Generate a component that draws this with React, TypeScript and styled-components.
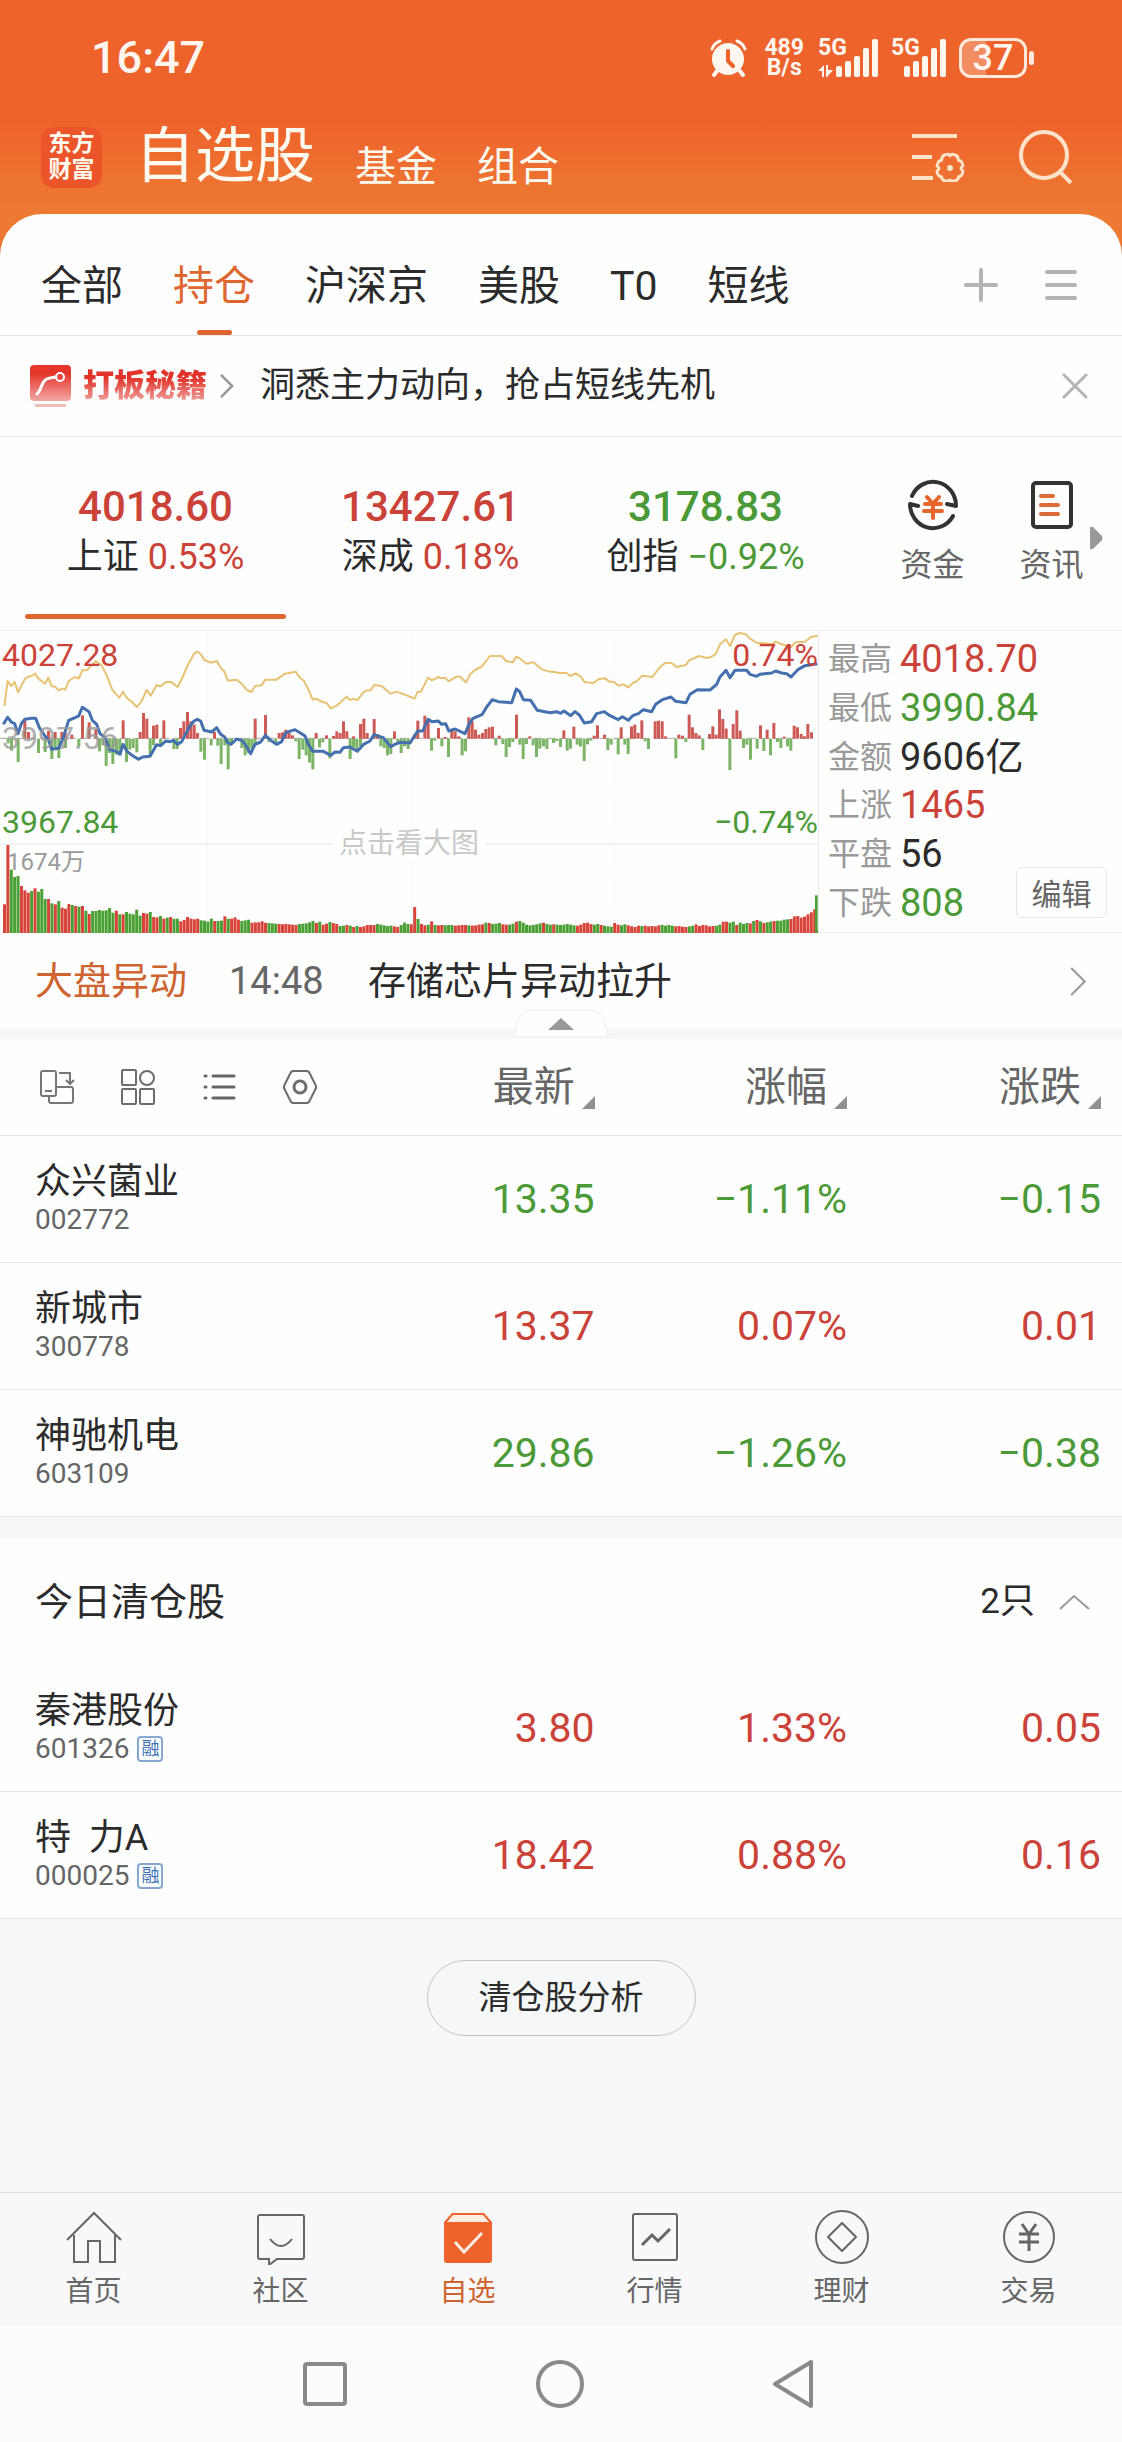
import React from "react";
import styled, { createGlobalStyle } from "styled-components";

const color = {
  up: "#cb4239",
  down: "#4c9a37",
  accent: "#e0662f",
  ink: "#2b2b2b",
  mid: "#666666",
  soft: "#9a9a9a",
  line: "#e6e6e6",
  band: "#f6f7f9",
};

type Tone = "up" | "down" | "ink";

const GlobalStyle = createGlobalStyle`
  *, *::before, *::after { box-sizing: border-box; }
  body {
    margin: 0;
    background: ${color.band};
    color: ${color.ink};
    font-family: Roboto, "Noto Sans CJK SC", sans-serif;
  }
  button {
    margin: 0;
    padding: 0;
    border: 0;
    background: none;
    font: inherit;
    color: inherit;
    cursor: pointer;
  }
  a { color: inherit; text-decoration: none; }
  h1, h2, p, dl, dd { margin: 0; font-size: inherit; font-weight: inherit; }
  svg { display: block; }
`;

const Page = styled.div`
  display: flex;
  flex-direction: column;
  min-height: 100vh;
  background: linear-gradient(#ee622b 0, #ee622b 118px, #ed7933 206px, #ed7933 300px, ${color.band} 300px);
`;

/* ---------- status bar ---------- */

const StatusBar = styled.div`
  display: flex;
  align-items: center;
  justify-content: space-between;
  height: 116px;
  padding: 0 88px 0 91px;
  color: #fff6ef;
`;

const Clock = styled.time`
  font-size: 45px;
  font-weight: 500;
  line-height: 48px;
`;

const StatusIcons = styled.div`
  display: flex;
  align-items: center;
`;

const NetSpeed = styled.div`
  display: flex;
  flex-direction: column;
  margin: 0 14px 0 17px;
  font-size: 23px;
  font-weight: 700;
  line-height: 20px;
  text-align: center;
`;

const Signal = styled.div`
  display: grid;
  margin-right: 12px;

  > * { grid-area: 1 / 1; }
`;

const SignalLabel = styled.span`
  font-size: 23px;
  font-weight: 700;
  line-height: 18px;
`;

const Battery = styled.div`
  display: flex;
  align-items: center;
  gap: 2px;
`;

const BatteryBody = styled.div`
  width: 68px;
  height: 40px;
  border: 3px solid #ffe9dc;
  border-radius: 12px;
  background: linear-gradient(90deg, #f28d61 38%, transparent 38%);
  font-size: 36px;
  font-weight: 500;
  line-height: 35px;
  text-align: center;
`;

const BatteryTip = styled.span`
  width: 5px;
  height: 14px;
  border-radius: 3px;
  background: #ffe9dc;
`;

/* ---------- header ---------- */

const Header = styled.header`
  display: flex;
  align-items: center;
  height: 98px;
  padding: 0 49px 16px 41px;
  color: #fffaf0;
`;

const Logo = styled.div`
  width: 61px;
  height: 61px;
  padding: 4px 0;
  border-radius: 13px;
  background: #ec5529;
  font-size: 23px;
  font-weight: 700;
  line-height: 26px;
  text-align: center;
`;

const Sections = styled.nav`
  display: flex;
  flex: 1;
  align-items: flex-end;
  gap: 40px;
  margin-left: 33px;
`;

const Section = styled.a<{ $current?: boolean }>`
  font-size: ${(p) => (p.$current ? 60 : 41)}px;
  line-height: ${(p) => (p.$current ? 70 : 50)}px;
`;

const HeaderActions = styled.div`
  display: flex;
  align-items: center;
  gap: 54px;
`;

/* ---------- sheet and tabs ---------- */

const Sheet = styled.main`
  display: flex;
  flex: 1;
  flex-direction: column;
  overflow: hidden;
  border-radius: 42px 42px 0 0;
  background: #fefefe;
`;

const TabRow = styled.div`
  display: flex;
  align-items: stretch;
  justify-content: space-between;
  height: 122px;
  padding: 0 44px 0 41px;
  border-bottom: 1px solid ${color.line};
`;

const Tabs = styled.div`
  display: flex;
  gap: 50px;
`;

const Tab = styled.button<{ $active?: boolean }>`
  display: flex;
  flex-direction: column;
  align-items: center;
  padding-top: 46px;
  font-size: 41px;
  line-height: 52px;
  color: ${(p) => (p.$active ? color.accent : color.ink)};

  &::after {
    content: "";
    width: 35px;
    height: 5px;
    margin-top: auto;
    border-radius: 3px;
    background: ${(p) => (p.$active ? color.accent : "transparent")};
  }
`;

const TabTools = styled.div`
  display: flex;
  align-items: center;
  gap: 46px;
  padding-top: 20px;
`;

/* ---------- banner ---------- */

const Banner = styled.div`
  display: flex;
  align-items: center;
  height: 101px;
  padding: 0 34px 0 30px;
  border-bottom: 1px solid ${color.line};
`;

const BannerLink = styled.a`
  display: flex;
  flex: 1;
  align-items: center;
`;

const BannerTag = styled.strong`
  margin: 0 13px 0 12px;
  background: linear-gradient(#e2332a 30%, #f0a49f 90%);
  background-clip: text;
  -webkit-background-clip: text;
  color: transparent;
  font-size: 31px;
  font-weight: 900;
  line-height: 40px;
`;

const BannerText = styled.span`
  margin-left: 26px;
  font-size: 35px;
  line-height: 44px;
`;

/* ---------- index strip ---------- */

const IndexStrip = styled.section`
  position: relative;
  display: grid;
  grid-template-columns: 275fr 275fr 275fr 30fr 119fr 119fr;
  height: 193px;
  padding: 0 11px 0 18px;
`;

const IndexCard = styled.button<{ $active?: boolean }>`
  display: flex;
  flex-direction: column;
  align-items: center;
  padding: 45px 7px 11px;

  &::after {
    content: "";
    width: 100%;
    height: 5px;
    margin-top: auto;
    border-radius: 3px;
    background: ${(p) => (p.$active ? color.accent : "transparent")};
  }
`;

const IndexValue = styled.strong<{ $tone: Tone }>`
  font-size: 42px;
  font-weight: 500;
  line-height: 50px;
  color: ${(p) => color[p.$tone]};
`;

const IndexLabel = styled.span`
  font-size: 36px;
  line-height: 50px;
  white-space: nowrap;
`;

const Toned = styled.span<{ $tone: Tone }>`
  color: ${(p) => color[p.$tone]};
`;

const Shortcut = styled.a`
  display: flex;
  flex-direction: column;
  align-items: center;
  gap: 13px;
  padding-top: 42px;
  font-size: 32px;
  line-height: 42px;
  color: ${color.mid};
`;

const MoreShortcuts = styled.button`
  position: absolute;
  top: 89px;
  right: 19px;
`;

const ShortcutGap = styled.span``;

/* ---------- chart and statistics ---------- */

const Market = styled.section`
  display: grid;
  grid-template-columns: 819fr 303fr;
  height: 303px;
  border-top: 1px solid #f0f0f0;
  border-bottom: 1px solid #f0f0f0;
`;

const ChartBox = styled.button`
  position: relative;
  border-right: 1px solid #ececec;
  font-size: 32px;
  line-height: 36px;

  > svg { width: 100%; height: 100%; }
`;

const ChartLabel = styled.span<{ $top: number; $right?: boolean; $ink: string }>`
  position: absolute;
  top: ${(p) => p.$top}px;
  ${(p) => (p.$right ? "right: 0" : "left: 2px")};
  color: ${(p) => p.$ink};
`;

const VolumeLabel = styled.span`
  position: absolute;
  top: 213px;
  left: 7px;
  font-size: 24px;
  color: ${color.soft};
`;

const ChartHint = styled.span`
  position: absolute;
  top: 195px;
  left: 50%;
  padding: 0 6px;
  transform: translateX(-50%);
  background: #fefefe;
  font-size: 28px;
  white-space: nowrap;
  color: #c9c9c9;
`;

const Stats = styled.dl`
  position: relative;
  display: grid;
  grid-auto-rows: 1fr;
  padding: 4px 0 6px 9px;
`;

const Stat = styled.div`
  display: flex;
  align-items: center;
  gap: 8px;
`;

const StatName = styled.dt`
  font-size: 32px;
  line-height: 48px;
  color: ${color.soft};
`;

const StatValue = styled.dd<{ $tone: Tone }>`
  font-size: 38px;
  line-height: 48px;
  color: ${(p) => color[p.$tone]};
`;

const EditButton = styled.button`
  position: absolute;
  right: 15px;
  bottom: 15px;
  width: 91px;
  height: 51px;
  padding-bottom: 2px;
  border: 1px solid #e6e6e6;
  border-radius: 6px;
  background: #fefefe;
  font-size: 30px;
  color: ${color.mid};
`;

/* ---------- event row ---------- */

const EventRow = styled.section`
  position: relative;
  display: flex;
  align-items: center;
  height: 106px;
  padding: 0 35px;
  border-bottom: 10px solid ${color.band};
  font-size: 38px;
  line-height: 48px;
`;

const EventTag = styled.strong`
  width: 194px;
  font-weight: 400;
  color: #cf6430;
`;

const EventTime = styled.time`
  width: 139px;
  color: ${color.mid};
`;

const EventTitle = styled.a`
  flex: 1;
`;

const Collapse = styled.button`
  position: absolute;
  bottom: -9px;
  left: 50%;
  transform: translateX(-50%);
`;

/* ---------- watch list ---------- */

const Table = styled.table`
  width: 100%;
  border-spacing: 0;
  table-layout: fixed;

  th, td { border-bottom: 1px solid ${color.line}; }
`;

const NameCol = styled.col`
  width: 30.5%;
`;

const ValueCol = styled.col`
  width: 22.5%;
`;

const HeadRow = styled.tr`
  height: 97px;
`;

const ToolHead = styled.th`
  padding: 0 0 0 39px;
`;

const ViewTools = styled.div`
  display: flex;
  gap: 45px;
`;

const Head = styled.th`
  padding: 0;
  font-weight: 400;
  text-align: right;

  &:last-child { padding-right: 21px; }
`;

const SortButton = styled.button`
  display: inline-flex;
  align-items: flex-end;
  gap: 7px;
  font-size: 41px;
  line-height: 50px;
  color: ${color.mid};

  > svg { margin-bottom: 3px; }
`;

const StockRow = styled.tr`
  height: 127px;
`;

const NameCell = styled.th`
  padding: 0 0 0 35px;
  font-weight: 400;
  text-align: left;
  white-space: nowrap;
`;

const StockName = styled.div`
  font-size: 36px;
  line-height: 42px;
  white-space: pre;
`;

const StockCode = styled.div`
  display: flex;
  align-items: center;
  gap: 8px;
  font-size: 28px;
  line-height: 34px;
  color: ${color.mid};
`;

const MarginBadge = styled.span`
  width: 26px;
  height: 26px;
  border: 2px solid #86a8d0;
  border-radius: 4px;
  font-size: 18px;
  line-height: 21px;
  text-align: center;
  color: #3f74b5;
`;

const Value = styled.td<{ $tone: Tone }>`
  padding: 0;
  font-size: 41px;
  line-height: 50px;
  text-align: right;
  color: ${(p) => color[p.$tone]};

  &:last-child { padding-right: 21px; }
`;

const ClearedHeader = styled.div`
  display: flex;
  align-items: center;
  justify-content: space-between;
  height: 148px;
  padding: 0 32px 0 35px;
  border-top: 21px solid ${color.band};
  font-size: 38px;
  line-height: 48px;
`;

const ClearedCount = styled.button`
  display: flex;
  align-items: center;
  gap: 24px;
  font-size: 35px;
`;

const Footer = styled.div`
  flex: 1;
  padding: 41px 0;
  background: ${color.band};
  text-align: center;
`;

const AnalyseButton = styled.button`
  height: 76px;
  padding: 0 51px;
  border: 1px solid #c4c4c4;
  border-radius: 38px;
  font-size: 33px;
  line-height: 72px;
`;

/* ---------- bottom bars ---------- */

const BottomNav = styled.nav`
  display: grid;
  grid-template-columns: repeat(6, 1fr);
  height: 133px;
  border-top: 1px solid #dedede;
  background: #f8f8fa;
`;

const NavItem = styled.a<{ $active?: boolean }>`
  display: flex;
  flex-direction: column;
  align-items: center;
  padding-top: 16px;
  gap: 8px;
  font-size: 28px;
  line-height: 38px;
  color: ${(p) => (p.$active ? "#cf6430" : color.mid)};
`;

const SystemBar = styled.div`
  display: grid;
  grid-template-columns: repeat(3, 1fr);
  align-items: center;
  justify-items: center;
  height: 117px;
  padding: 0 210px 0 208px;
  background: #fcfcfc;
`;

/* ---------- data ---------- */

const tabs = ["全部", "持仓", "沪深京", "美股", "T0", "短线"];

const indices: { value: string; name: string; change: string; tone: Tone }[] = [
  { value: "4018.60", name: "上证", change: "0.53%", tone: "up" },
  { value: "13427.61", name: "深成", change: "0.18%", tone: "up" },
  { value: "3178.83", name: "创指", change: "−0.92%", tone: "down" },
];

const stats: { name: string; value: string; tone: Tone }[] = [
  { name: "最高", value: "4018.70", tone: "up" },
  { name: "最低", value: "3990.84", tone: "down" },
  { name: "金额", value: "9606亿", tone: "ink" },
  { name: "上涨", value: "1465", tone: "up" },
  { name: "平盘", value: "56", tone: "ink" },
  { name: "下跌", value: "808", tone: "down" },
];

type Stock = { name: string; code: string; margin?: boolean; last: string; pct: string; diff: string; tone: Tone };

const holdings: Stock[] = [
  { name: "众兴菌业", code: "002772", last: "13.35", pct: "−1.11%", diff: "−0.15", tone: "down" },
  { name: "新城市", code: "300778", last: "13.37", pct: "0.07%", diff: "0.01", tone: "up" },
  { name: "神驰机电", code: "603109", last: "29.86", pct: "−1.26%", diff: "−0.38", tone: "down" },
];

const cleared: Stock[] = [
  { name: "秦港股份", code: "601326", margin: true, last: "3.80", pct: "1.33%", diff: "0.05", tone: "up" },
  { name: "特  力A", code: "000025", margin: true, last: "18.42", pct: "0.88%", diff: "0.16", tone: "up" },
];

/* Chart units: three per pixel; one minute bar every 10.17 units. */
const averageLine =
  "13,255 23,180 34,195 44,183 54,214 74,175 85,167 95,165 105,158 115,173 135,188 145,170 155,195 165,197 176,208 186,203 196,206 206,180 225,168 236,173 247,148 260,148 275,133 287,120 305,133 320,163 338,208 358,230 369,212 380,230 395,242 411,258 425,240 440,207 452,224 470,192 481,196 500,182 515,184 533,198 545,175 562,135 582,98 592,92 602,99 613,117 633,125 650,120 663,142 672,150 684,179 710,176 725,188 740,207 755,213 765,195 785,193 796,176 830,176 855,158 887,152 897,167 912,180 928,212 938,236 948,233 970,244 980,246 992,262 1010,254 1040,227 1050,237 1062,233 1072,238 1091,213 1101,208 1112,208 1122,192 1145,195 1172,218 1190,212 1222,224 1232,228 1244,233 1253,212 1263,212 1284,170 1296,178 1315,168 1325,172 1335,170 1346,181 1365,169 1378,166 1398,184 1410,160 1425,147 1445,137 1470,105 1505,105 1518,120 1538,124 1549,107 1559,112 1579,128 1600,124 1625,145 1645,151 1680,156 1700,156 1711,165 1727,157 1741,166 1755,184 1780,186 1797,174 1815,172 1827,181 1843,184 1855,194 1870,190 1885,199 1898,186 1910,181 1927,164 1957,168 1980,138 1995,126 2015,126 2030,138 2058,132 2067,118 2097,105 2120,111 2135,107 2148,98 2160,70 2178,55 2190,75 2205,42 2220,36 2238,40 2250,53 2272,66 2290,66 2315,70 2327,62 2345,70 2373,78 2387,64 2415,62 2433,48 2452,44";

const priceLine =
  "10,310 23,289 34,303 44,308 54,338 64,308 74,295 95,292 107,292 118,320 135,345 145,355 155,385 176,382 190,350 206,298 225,290 236,285 247,259 267,272 277,298 290,310 300,338 315,350 328,385 350,392 360,400 369,370 382,392 395,402 415,415 428,408 450,406 462,385 470,371 482,374 497,360 510,362 520,358 533,370 545,362 555,343 570,315 582,300 592,295 602,300 612,328 635,333 650,320 662,340 674,348 684,366 693,370 710,354 725,358 735,370 752,398 765,370 782,363 796,343 815,360 830,370 845,362 857,335 885,326 900,335 915,345 925,370 938,391 970,391 992,403 1005,393 1020,394 1030,380 1050,378 1072,391 1091,370 1110,360 1122,341 1150,350 1172,377 1185,370 1200,364 1230,366 1253,330 1268,330 1284,295 1296,302 1315,300 1325,310 1337,308 1346,330 1365,324 1395,338 1408,308 1418,293 1447,280 1460,258 1477,236 1495,242 1535,245 1549,204 1559,212 1570,236 1592,238 1612,268 1650,275 1670,272 1682,277 1692,270 1712,284 1725,272 1738,282 1753,306 1775,302 1790,278 1813,272 1830,284 1855,296 1867,287 1885,298 1898,284 1915,278 1930,266 1955,272 1967,250 1987,236 2013,228 2027,241 2058,245 2070,220 2092,206 2130,207 2150,190 2160,168 2178,148 2190,170 2205,148 2240,148 2250,160 2270,166 2280,160 2315,156 2327,150 2345,156 2360,158 2373,168 2395,145 2415,134 2452,128";

/* [x, height]: above zero is buying strength, below is selling. */
const momentum: [number, number][] = [
  [74, 54], [85, 20], [145, 24], [165, 20], [185, 20], [195, 17], [215, 12], [247, 70], [267, 49], [287, 27], [369, 55],
  [420, 20], [430, 77], [440, 60], [460, 39], [470, 42], [491, 55], [541, 32], [551, 52], [562, 80], [572, 52], [582, 42],
  [592, 17], [643, 20], [765, 60], [796, 71], [837, 17], [847, 19], [857, 27], [867, 17], [877, 10], [948, 17], [979, 10],
  [1000, 8], [1010, 22], [1020, 17], [1030, 52], [1040, 22], [1060, 7], [1081, 44], [1091, 60], [1101, 17], [1122, 59],
  [1132, 14], [1183, 22], [1244, 14], [1253, 54], [1274, 69], [1284, 52], [1315, 32], [1335, 5], [1355, 27], [1365, 22], [1376, 7],
  [1406, 64], [1416, 52], [1426, 27], [1436, 12], [1447, 17], [1457, 29], [1467, 34], [1477, 36], [1497, 9], [1549, 72],
  [1589, 7], [1691, 25], [1721, 36], [1782, 9], [1792, 40], [1813, 12], [1863, 34], [1894, 37], [1904, 42], [1914, 17],
  [1925, 55], [1965, 52], [1975, 54], [1986, 52], [1996, 7], [2036, 12], [2047, 9], [2067, 72], [2077, 34], [2087, 17],
  [2097, 10], [2128, 14], [2138, 37], [2148, 12], [2158, 88], [2168, 59], [2178, 30], [2199, 44], [2210, 85], [2220, 24],
  [2281, 40], [2301, 27], [2321, 47], [2352, 6], [2382, 39], [2392, 34], [2403, 14], [2413, 7], [2423, 44], [2434, 19],
  [24, -14], [34, -36], [54, -70], [115, -43], [135, -40], [155, -61], [165, -28], [176, -58], [196, -28], [236, -23], [298, -38],
  [308, -20], [318, -82], [328, -43], [338, -76], [349, -48], [359, -43], [379, -70], [389, -33], [399, -28], [410, -41],
  [450, -53], [460, -20], [481, -23], [521, -31], [531, -31], [602, -39], [613, -63], [633, -20], [653, -21], [663, -76],
  [674, -20], [684, -92], [694, -14], [725, -28], [735, -50], [745, -43], [755, -31], [765, -21], [806, -10], [827, -18],
  [887, -8], [897, -61], [908, -33], [918, -50], [928, -72], [938, -92], [958, -26], [968, -11], [989, -59], [1050, -61],
  [1060, -26], [1070, -36], [1081, -23], [1142, -23], [1152, -28], [1162, -50], [1172, -46], [1193, -12], [1203, -43],
  [1213, -23], [1224, -31], [1294, -36], [1304, -6], [1325, -23], [1345, -55], [1386, -50], [1396, -38], [1487, -20],
  [1508, -16], [1518, -55], [1528, -25], [1538, -10], [1559, -18], [1569, -61], [1579, -16], [1599, -20], [1609, -55],
  [1619, -30], [1630, -23], [1640, -31], [1660, -13], [1670, -7], [1681, -25], [1701, -36], [1711, -30], [1731, -18],
  [1741, -24], [1752, -67], [1762, -17], [1772, -6], [1823, -34], [1833, -18], [1854, -47], [1874, -18], [1884, -46],
  [1935, -8], [1945, -31], [2027, -59], [2057, -10], [2108, -34], [2189, -94], [2230, -28], [2240, -18], [2251, -63],
  [2271, -30], [2291, -37], [2311, -50], [2332, -10], [2342, -28], [2362, -23], [2372, -36],
];

const volumes = [
  86, 264, 190, 168, 171, 141, 128, 121, 126, 134, 124, 132, 102, 102, 89, 86, 96, 76, 73, 87, 84, 81, 79, 81, 67, 57,
  66, 66, 69, 67, 68, 75, 61, 67, 56, 56, 63, 58, 56, 70, 52, 60, 58, 63, 48, 47, 51, 43, 46, 48, 43, 43, 35, 39, 48, 43,
  41, 43, 38, 37, 34, 43, 36, 36, 37, 50, 43, 43, 47, 40, 36, 38, 40, 31, 32, 32, 35, 31, 30, 29, 28, 27, 26, 27, 26, 25,
  24, 27, 28, 29, 32, 36, 30, 34, 25, 28, 33, 30, 27, 21, 22, 24, 22, 18, 21, 18, 20, 24, 24, 24, 27, 25, 23, 21, 22, 20, 18,
  24, 31, 27, 26, 78, 42, 27, 23, 25, 35, 24, 23, 24, 23, 24, 24, 22, 23, 24, 24, 23, 22, 23, 25, 26, 31, 30, 27, 28, 30,
  26, 25, 25, 28, 34, 36, 31, 25, 23, 24, 26, 29, 31, 27, 25, 26, 25, 24, 25, 27, 25, 23, 22, 25, 30, 31, 27, 25, 27, 24,
  22, 20, 19, 30, 25, 23, 26, 23, 20, 18, 22, 21, 22, 20, 21, 20, 23, 24, 22, 24, 22, 20, 21, 19, 18, 20, 22, 26, 21, 24,
  23, 20, 21, 22, 25, 34, 34, 31, 34, 24, 31, 27, 30, 29, 36, 39, 35, 30, 32, 34, 36, 37, 37, 40, 41, 42, 50, 51, 46, 49, 56, 62,
  71, 9,
];

const volumeTones =
  "RRGGGRRRGRGGGRGRGRRRGRGRGRGGGGGGGRGRGGGGGRRGRRGRGRGGRRRRRRGGGGRGGRGRRRGGGRRRRRGGGRRRRRRGGGGGRGRRGRRGGRGRGRRRRRGGGGGRRGGGRRGRRGRGRRGGGRRRRGRRRRGRGGGRRGGRGGGGGGGRGGRGGGGGGRRRRRGGRGGGRRGGRRRRGRRRRRGGGGRRRRGGRRRRRRGGRRGGRGGGRGRGRGGRGGGGRRRRRR";

/* ---------- drawings ---------- */

const AlarmIcon = () => (
  <svg width="37" height="38" viewBox="0 0 37 38" fill="none" stroke="currentColor" strokeLinecap="round">
    <circle cx="18" cy="20" r="16" fill="currentColor" stroke="none" />
    <path d="M2 10a13 13 0 0 1 8-8M35 10a13 13 0 0 0-8-8" strokeWidth="3" />
    <path d="M7 32l-3 4M30 32l3 4" strokeWidth="4" />
    <path d="M18 12v10l5 5" stroke="#ee622b" strokeWidth="4" strokeLinejoin="round" />
  </svg>
);

const SignalBars = ({ traffic }: { traffic?: boolean }) => {
  const width = traffic ? 61 : 56;
  return (
    <svg width={width} height="38" viewBox={`0 0 ${width} 38`} fill="currentColor">
      {traffic && <path d="M0 32l6-6v12H4v-6zM8 26h2v5h5l-6 7H8z" />}
      {[11, 16, 21, 29, 38].map((h, i) => (
        <rect key={h} x={(traffic ? 18 : 13) + i * 9} y={38 - h} width="6" height={h} rx="2" />
      ))}
    </svg>
  );
};

const ListSettingsIcon = () => (
  <svg width="53" height="50" viewBox="0 0 53 50" fill="none" stroke="#ffe3c8" strokeWidth="4">
    <path d="M0 4h45M0 25h20M0 46h21" />
    <path
      d="M33 23q4-2 5 1 1-3 5-1 3 1 3 3 0 3 3 3 2 3 2 5-4 2 0 5 0 3-2 5-3 0-3 3-4 4-8 1-4 3-8-1 0-3-3-3-2-2-2-5 4-3 0-5 0-2 2-5 3 0 3-3 0-2 3-3z"
      strokeWidth="3"
      strokeLinejoin="round"
    />
    <circle cx="38" cy="36" r="3" fill="#ffe3c8" stroke="none" />
  </svg>
);

const SearchIcon = () => (
  <svg width="54" height="54" viewBox="0 0 54 54" fill="none" stroke="#ffe3c8" strokeWidth="4">
    <circle cx="25" cy="25" r="23" />
    <path d="M40 41l12 12" />
  </svg>
);

const PlusIcon = () => (
  <svg width="34" height="34" viewBox="0 0 34 34" stroke="#b3b3b3" strokeWidth="4" strokeLinecap="round">
    <path d="M17 2v30M2 17h30" />
  </svg>
);

const MenuIcon = () => (
  <svg width="34" height="34" viewBox="0 0 34 34" stroke="#b3b3b3" strokeWidth="4" strokeLinecap="round">
    <path d="M3 4h28M3 17h28M3 30h28" />
  </svg>
);

const BannerIcon = () => (
  <svg width="41" height="43" viewBox="0 0 41 43" fill="none">
    <defs>
      <linearGradient id="bannerFill" x1="0" y1="0" x2="0" y2="1">
        <stop offset="25%" stopColor="#e6372c" />
        <stop offset="100%" stopColor="#f0a8a4" />
      </linearGradient>
    </defs>
    <rect width="41" height="36" rx="4" fill="url(#bannerFill)" />
    <rect x="5" y="39" width="31" height="3" rx="1" fill="#f0bcb9" />
    <path d="M7 29c5-4 4-15 13-16l6-1" stroke="#fff" strokeWidth="3" strokeLinecap="round" />
    <circle cx="30" cy="12" r="4" stroke="#fff" strokeWidth="2" />
  </svg>
);

const Chevron = ({ width, height, weight }: { width: number; height: number; weight: number }) => (
  <svg width={width} height={height} viewBox="0 0 16 28" fill="none" stroke="#999" strokeWidth={weight}>
    <path d="M1 1l13 13L1 27" />
  </svg>
);

const ChevronUp = () => (
  <svg width="31" height="16" viewBox="0 0 31 16" fill="none" stroke="#999" strokeWidth="2">
    <path d="M1 15L15 2l15 13" />
  </svg>
);

const CloseIcon = () => (
  <svg width="26" height="26" viewBox="0 0 26 26" stroke="#b3b3b3" strokeWidth="3" strokeLinecap="round">
    <path d="M2 2l22 22M24 2L2 24" />
  </svg>
);

const FundIcon = () => (
  <svg width="52" height="52" viewBox="0 0 52 52" fill="none" stroke="#333" strokeWidth="4" strokeLinecap="round" strokeLinejoin="round">
    <path d="M5 17A23 24 0 0 1 49 27l-9-2" />
    <path d="M46 37A23 24 0 0 1 3 25l8 2" />
    <path d="M20 18l6 7 6-7M18 25h16M17 32h18M26 25v14" stroke="#e8652c" />
  </svg>
);

const NewsIcon = () => (
  <svg width="52" height="52" viewBox="0 0 52 52" fill="none" stroke="#333" strokeWidth="4" strokeLinecap="round">
    <rect x="7" y="4" width="38" height="44" rx="3" />
    <path d="M15 17h12M15 26h17M15 35h17" stroke="#dc6b38" />
  </svg>
);

const Chart = () => (
  <svg viewBox="0 30 2454 906" preserveAspectRatio="none" fill="none">
    {[623, 1234, 1843].map((x) => (
      <path key={x} d={`M${x} 36V936`} stroke="#e9e9e9" strokeWidth="3" strokeDasharray="4 6" />
    ))}
    <path d="M0 669H2454" stroke="#ececec" strokeWidth="4" />
    <path d="M0 352H2440" stroke="#a9a9a9" strokeWidth="3" strokeDasharray="28 12" />
    {momentum.map(([x, h]) => (
      <rect key={`${x}/${h}`} x={x - 4} y={h > 0 ? 353 - h : 353} width="9" height={Math.abs(h)} fill={h > 0 ? "#cd5a55" : "#7cb566"} />
    ))}
    {volumes.map((h, i) => (
      <rect key={i} x={9 + i * 10.17} y={936 - h} width="9" height={h} fill={volumeTones[i] === "G" ? "#4ba035" : "#d8443a"} />
    ))}
    <rect x="2445" y="823" width="8" height="113" fill="#4ba035" />
    <polyline points={averageLine} stroke="#e8c173" strokeWidth="6" strokeLinejoin="round" />
    <polyline points={priceLine} stroke="#4470b0" strokeWidth="9" strokeLinejoin="round" />
  </svg>
);

const CollapseIcon = () => (
  <svg width="96" height="29" viewBox="0 0 96 29">
    <path d="M1 28C4 12 6 1 20 1h56c14 0 16 11 19 27z" fill="#fefefe" stroke="#ededed" strokeWidth="1" />
    <path d="M35 21L48 9l13 12z" fill="#999" />
  </svg>
);

const RotateIcon = () => (
  <svg width="36" height="36" viewBox="0 0 36 36" fill="none" stroke="#777" strokeWidth="2">
    <rect x="2" y="2" width="15" height="25" rx="2" />
    <path d="M10 28v4q0 2 2 2h20q2 0 2-2V20q0-2-2-2H18M6 22h7M20 4h11v10M27 11l4 4 4-4" />
  </svg>
);

const GridIcon = () => (
  <svg width="36" height="36" viewBox="0 0 36 36" fill="none" stroke="#6c6c6c" strokeWidth="2">
    <rect x="2" y="1" width="14" height="15" rx="1" />
    <rect x="2" y="20" width="14" height="15" rx="1" />
    <rect x="20" y="20" width="14" height="15" rx="1" />
    <circle cx="27" cy="9" r="7" />
  </svg>
);

const ListIcon = () => (
  <svg width="36" height="36" viewBox="0 0 36 36" stroke="#666" strokeWidth="3" strokeLinecap="round">
    <path d="M4 7h1M4 18h1M4 29h1M12 7h21M12 18h21M12 29h21" />
  </svg>
);

const HexIcon = () => (
  <svg width="36" height="36" viewBox="0 0 36 36" fill="none" stroke="#6c6c6c" strokeWidth="2" strokeLinejoin="round">
    <path d="M11 2h14l2 1 7 14v2l-7 14-2 1H11l-2-1-7-14v-2L9 3z" />
    <circle cx="18" cy="18" r="6" strokeWidth="3" />
  </svg>
);

const SortMark = () => (
  <svg width="13" height="13" viewBox="0 0 13 13" fill="#8f8f94">
    <path d="M13 0v13H0z" />
  </svg>
);

const NavIcon = ({ name }: { name: string }) => (
  <svg width="56" height="56" viewBox="0 0 56 56" fill="none" stroke="#666" strokeWidth="2">
    {name === "home" && <path d="M1 31L28 4l27 27M8 26v27h14V32h12v21h15V26" />}
    {name === "community" && (
      <>
        <path d="M7 6h42q2 0 2 2v40q0 2-2 2H24l-8 6v-6H7q-2 0-2-2V8q0-2 2-2z" />
        <path d="M17 30q11 14 22 0" />
      </>
    )}
    {name === "watch" && (
      <>
        <path d="M4 13l8-9h32l8 9v38q0 3-3 3H7q-3 0-3-3z" fill="#ed632b" stroke="none" />
        <path d="M7 13l6-7h30l6 7z" fill="#fdeee4" stroke="none" />
        <path d="M15 33l9 10 18-19" stroke="#fdeee4" strokeWidth="3" />
      </>
    )}
    {name === "market" && (
      <>
        <rect x="6" y="5" width="44" height="46" rx="2" />
        <path d="M15 36l10-10 6 6 12-12" strokeWidth="3" />
      </>
    )}
    {name === "wealth" && (
      <>
        <circle cx="28" cy="28" r="26" />
        <path d="M28 14l14 14-14 14-14-14z" strokeLinejoin="round" />
      </>
    )}
    {name === "trade" && (
      <>
        <circle cx="28" cy="28" r="25" />
        <path d="M21 15l7 10 7-10M18 25h20M18 33h20M28 25v17" strokeWidth="3" />
      </>
    )}
  </svg>
);

/* ---------- parts ---------- */

const Columns = () => (
  <colgroup>
    <NameCol />
    <ValueCol />
    <ValueCol />
    <col />
  </colgroup>
);

const StockLine = ({ stock }: { stock: Stock }) => (
  <StockRow>
    <NameCell scope="row">
      <StockName>{stock.name}</StockName>
      <StockCode>
        {stock.code}
        {stock.margin && <MarginBadge>融</MarginBadge>}
      </StockCode>
    </NameCell>
    <Value $tone={stock.tone}>{stock.last}</Value>
    <Value $tone={stock.tone}>{stock.pct}</Value>
    <Value $tone={stock.tone}>{stock.diff}</Value>
  </StockRow>
);

const navItems = [
  { icon: "home", label: "首页" },
  { icon: "community", label: "社区" },
  { icon: "watch", label: "自选" },
  { icon: "market", label: "行情" },
  { icon: "wealth", label: "理财" },
  { icon: "trade", label: "交易" },
];

export default function App() {
  return (
    <Page lang="zh-CN">
      <GlobalStyle />
      <StatusBar>
        <Clock>16:47</Clock>
        <StatusIcons>
          <AlarmIcon />
          <NetSpeed>
            <span>489</span>
            <span>B/s</span>
          </NetSpeed>
          <Signal>
            <SignalBars traffic />
            <SignalLabel>5G</SignalLabel>
          </Signal>
          <Signal>
            <SignalBars />
            <SignalLabel>5G</SignalLabel>
          </Signal>
          <Battery>
            <BatteryBody>37</BatteryBody>
            <BatteryTip />
          </Battery>
        </StatusIcons>
      </StatusBar>

      <Header>
        <Logo>
          东方
          <br />
          财富
        </Logo>
        <Sections>
          <Section href="#stocks" $current aria-current="page">自选股</Section>
          <Section href="#funds">基金</Section>
          <Section href="#portfolio">组合</Section>
        </Sections>
        <HeaderActions>
          <button aria-label="设置"><ListSettingsIcon /></button>
          <button aria-label="搜索"><SearchIcon /></button>
        </HeaderActions>
      </Header>

      <Sheet>
        <TabRow>
          <Tabs>
            {tabs.map((tab) => (
              <Tab key={tab} $active={tab === "持仓"}>{tab}</Tab>
            ))}
          </Tabs>
          <TabTools>
            <button aria-label="添加"><PlusIcon /></button>
            <button aria-label="菜单"><MenuIcon /></button>
          </TabTools>
        </TabRow>

        <Banner>
          <BannerLink href="#tips">
            <BannerIcon />
            <BannerTag>打板秘籍</BannerTag>
            <Chevron width={14} height={24} weight={3} />
            <BannerText>洞悉主力动向，抢占短线先机</BannerText>
          </BannerLink>
          <button aria-label="关闭"><CloseIcon /></button>
        </Banner>

        <IndexStrip>
          {indices.map((item, i) => (
            <IndexCard key={item.name} $active={i === 0}>
              <IndexValue $tone={item.tone}>{item.value}</IndexValue>
              <IndexLabel>
                {item.name} <Toned $tone={item.tone}>{item.change}</Toned>
              </IndexLabel>
            </IndexCard>
          ))}
          <ShortcutGap />
          <Shortcut href="#flows">
            <FundIcon />
            资金
          </Shortcut>
          <Shortcut href="#news">
            <NewsIcon />
            资讯
          </Shortcut>
          <MoreShortcuts aria-label="更多">
            <svg width="14" height="24" viewBox="0 0 14 24" fill="#999">
              <path d="M1 2q0-2 3-1l9 9q1 2 0 4l-9 9q-3 1-3-1z" />
            </svg>
          </MoreShortcuts>
        </IndexStrip>

        <Market>
          <ChartBox aria-label="分时图">
            <Chart />
            <ChartLabel $top={6} $ink={color.up}>4027.28</ChartLabel>
            <ChartLabel $top={89} $ink="#999999cc">3997.56</ChartLabel>
            <ChartLabel $top={173} $ink={color.down}>3967.84</ChartLabel>
            <ChartLabel $top={6} $ink={color.up} $right>0.74%</ChartLabel>
            <ChartLabel $top={173} $ink={color.down} $right>−0.74%</ChartLabel>
            <VolumeLabel>1674万</VolumeLabel>
            <ChartHint>点击看大图</ChartHint>
          </ChartBox>
          <Stats>
            {stats.map((s) => (
              <Stat key={s.name}>
                <StatName>{s.name}</StatName>
                <StatValue $tone={s.tone}>{s.value}</StatValue>
              </Stat>
            ))}
            <EditButton>编辑</EditButton>
          </Stats>
        </Market>

        <EventRow>
          <EventTag>大盘异动</EventTag>
          <EventTime>14:48</EventTime>
          <EventTitle href="#event">存储芯片异动拉升</EventTitle>
          <Chevron width={17} height={29} weight={2} />
          <Collapse aria-label="收起"><CollapseIcon /></Collapse>
        </EventRow>

        <Table>
          <Columns />
          <thead>
            <HeadRow>
              <ToolHead>
                <ViewTools>
                  <button aria-label="横屏"><RotateIcon /></button>
                  <button aria-label="宫格"><GridIcon /></button>
                  <button aria-label="列表"><ListIcon /></button>
                  <button aria-label="设置"><HexIcon /></button>
                </ViewTools>
              </ToolHead>
              {["最新", "涨幅", "涨跌"].map((h) => (
                <Head key={h} scope="col">
                  <SortButton>
                    {h}
                    <SortMark />
                  </SortButton>
                </Head>
              ))}
            </HeadRow>
          </thead>
          <tbody>
            {holdings.map((s) => <StockLine key={s.code} stock={s} />)}
          </tbody>
        </Table>

        <ClearedHeader>
          <h2>今日清仓股</h2>
          <ClearedCount>
            2只
            <ChevronUp />
          </ClearedCount>
        </ClearedHeader>
        <Table>
          <Columns />
          <tbody>
            {cleared.map((s) => <StockLine key={s.code} stock={s} />)}
          </tbody>
        </Table>

        <Footer>
          <AnalyseButton>清仓股分析</AnalyseButton>
        </Footer>
      </Sheet>

      <BottomNav>
        {navItems.map((item) => (
          <NavItem key={item.icon} href={`#${item.icon}`} $active={item.icon === "watch"}>
            <NavIcon name={item.icon} />
            {item.label}
          </NavItem>
        ))}
      </BottomNav>
      <SystemBar>
        <button aria-label="最近任务">
          <svg width="44" height="44" viewBox="0 0 44 44" fill="none" stroke="#8a8a8a" strokeWidth="4">
            <rect x="2" y="2" width="40" height="40" rx="2" />
          </svg>
        </button>
        <button aria-label="主屏幕">
          <svg width="48" height="48" viewBox="0 0 48 48" fill="none" stroke="#8a8a8a" strokeWidth="4">
            <circle cx="24" cy="24" r="22" />
          </svg>
        </button>
        <button aria-label="返回">
          <svg width="48" height="48" viewBox="0 0 48 48" fill="none" stroke="#8a8a8a" strokeWidth="4" strokeLinejoin="round">
            <path d="M4 24L40 2v44z" />
          </svg>
        </button>
      </SystemBar>
    </Page>
  );
}
